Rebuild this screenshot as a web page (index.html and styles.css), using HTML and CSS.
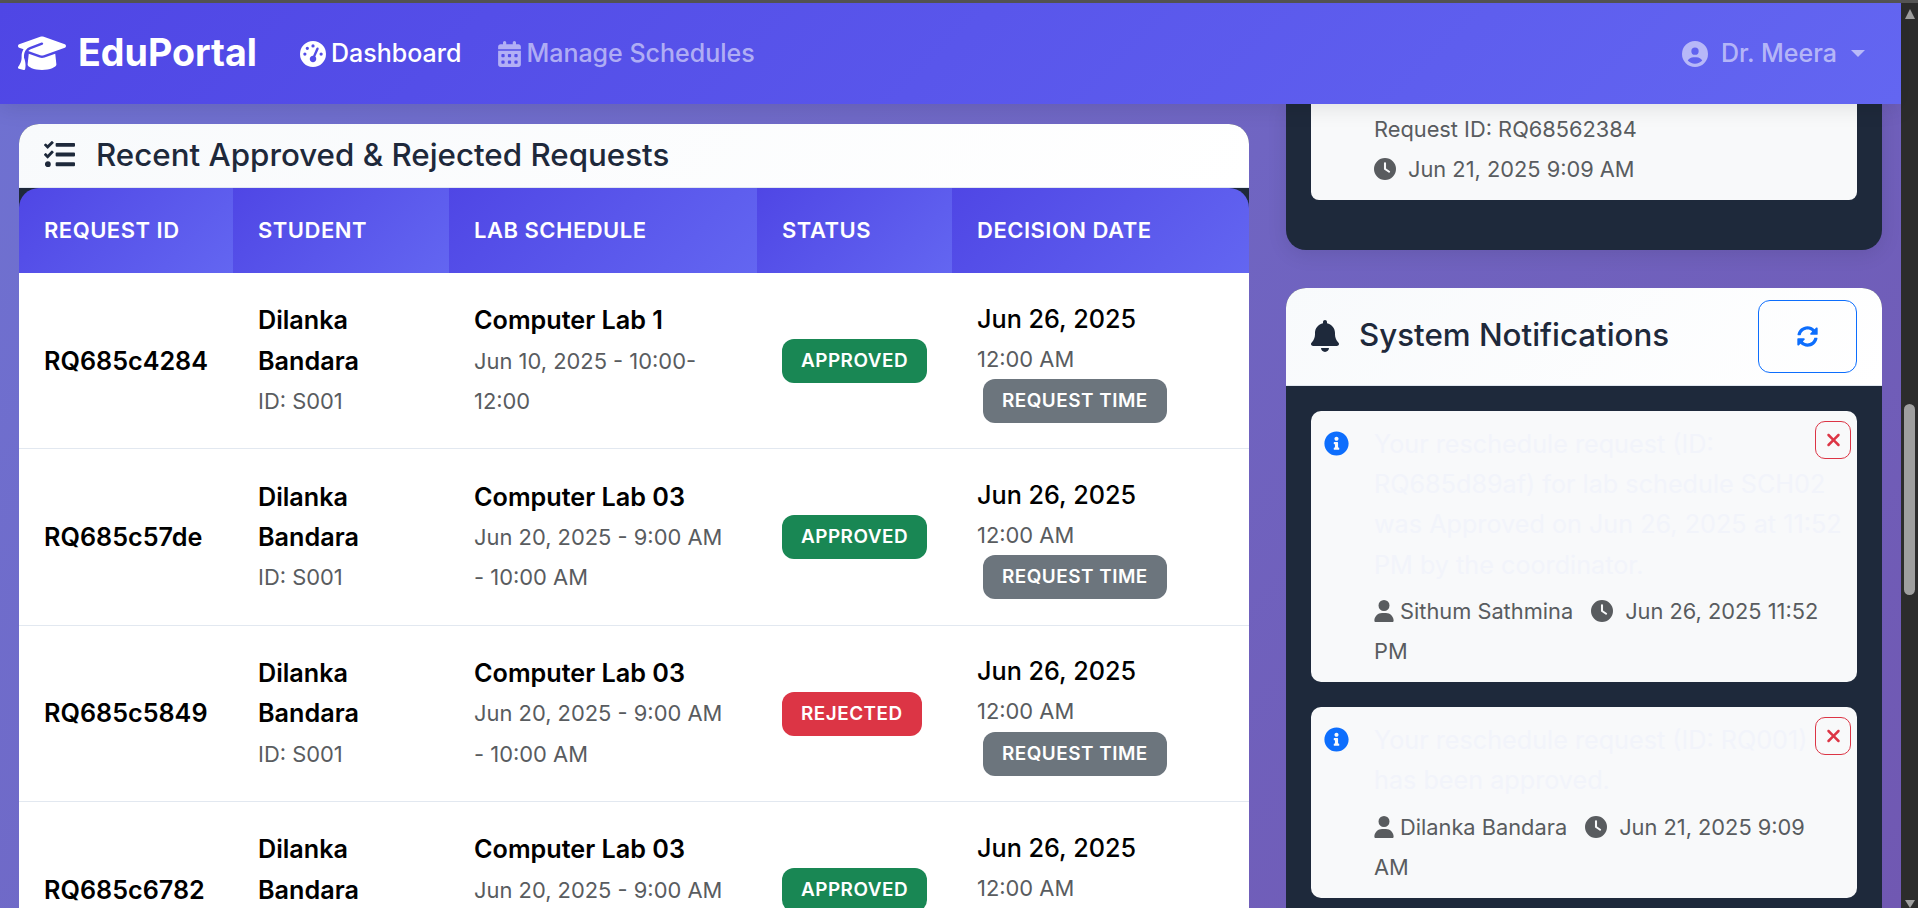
FILE: index.html
```html
<!DOCTYPE html>
<html lang="en">
<head>
<meta charset="utf-8">
<title>EduPortal</title>
<link rel="stylesheet" href="styles.css">
</head>
<body>
<svg class="defs" width="0" height="0" aria-hidden="true">
  <symbol id="i-cap" viewBox="0 0 640 512"><path d="M320 32c-8.1 0-16.1 1.4-23.7 4.1L15.8 137.4C6.3 140.9 0 149.9 0 160s6.3 19.1 15.8 22.6l57.9 20.9C57.3 229.3 48 259.8 48 291.9v28.1c0 28.4-10.8 57.7-22.3 80.8c-6.5 13-13.9 25.8-22.5 37.6C0 442.7-.9 448.3 .9 453.4s6 8.9 11.2 10.2l64 16c4.2 1.1 8.7 .3 12.4-2s6.3-6.1 7.1-10.4c8.6-42.8 4.3-81.2-2.1-108.7C90.3 344.3 86 329.8 80 316.5V291.9c0-30.2 10.2-58.7 27.9-81.5c12.9-15.5 29.6-28 49.2-35.7l157-61.7c8.2-3.2 17.5 .8 20.7 9s-.8 17.5-9 20.7l-157 61.7c-12.4 4.9-23.3 12.4-32.2 21.6l159.6 57.6c7.6 2.7 15.6 4.1 23.7 4.1s16.1-1.4 23.7-4.1L624.2 182.6c9.5-3.4 15.8-12.5 15.8-22.6s-6.3-19.1-15.8-22.6L343.7 36.1C336.1 33.4 328.1 32 320 32zM128 408c0 35.3 86 72 192 72s192-36.7 192-72L496.7 262.6 354.5 314c-11.1 4-22.8 6-34.5 6s-23.5-2-34.5-6L143.3 262.6 128 408z"/></symbol>
  <symbol id="i-gauge" viewBox="0 0 512 512"><path d="M0 256a256 256 0 1 1 512 0A256 256 0 1 1 0 256zM288 96a32 32 0 1 0 -64 0 32 32 0 1 0 64 0zM256 416c35.3 0 64-28.7 64-64c0-17.4-6.9-33.1-18.1-44.6L366 161.7c5.3-12.1-.2-26.3-12.3-31.6s-26.3 .2-31.6 12.3L257.9 288c-.6 0-1.3 0-1.9 0c-35.3 0-64 28.7-64 64s28.7 64 64 64zM176 144a32 32 0 1 0 -64 0 32 32 0 1 0 64 0zM96 288a32 32 0 1 0 0-64 32 32 0 1 0 0 64zm352-32a32 32 0 1 0 -64 0 32 32 0 1 0 64 0z"/></symbol>
  <symbol id="i-cal" viewBox="0 0 448 512"><path d="M128 0c17.7 0 32 14.3 32 32V64H288V32c0-17.7 14.3-32 32-32s32 14.3 32 32V64h48c26.5 0 48 21.5 48 48v48H0V112C0 85.5 21.5 64 48 64H96V32c0-17.7 14.3-32 32-32zM0 192H448V464c0 26.5-21.5 48-48 48H48c-26.5 0-48-21.5-48-48V192zm64 80v32c0 8.8 7.2 16 16 16h32c8.8 0 16-7.2 16-16V272c0-8.8-7.2-16-16-16H80c-8.8 0-16 7.2-16 16zm128 0v32c0 8.8 7.2 16 16 16h32c8.8 0 16-7.2 16-16V272c0-8.8-7.2-16-16-16H208c-8.8 0-16 7.2-16 16zm144-16c-8.8 0-16 7.2-16 16v32c0 8.8 7.2 16 16 16h32c8.8 0 16-7.2 16-16V272c0-8.8-7.2-16-16-16H336zM64 400v32c0 8.8 7.2 16 16 16h32c8.8 0 16-7.2 16-16V400c0-8.8-7.2-16-16-16H80c-8.8 0-16 7.2-16 16zm144-16c-8.8 0-16 7.2-16 16v32c0 8.8 7.2 16 16 16h32c8.8 0 16-7.2 16-16V400c0-8.8-7.2-16-16-16H208zm112 16v32c0 8.8 7.2 16 16 16h32c8.8 0 16-7.2 16-16V400c0-8.8-7.2-16-16-16H336c-8.8 0-16 7.2-16 16z"/></symbol>
  <symbol id="i-usercircle" viewBox="0 0 512 512"><path d="M399 384.2C376.9 345.8 335.4 320 288 320H224c-47.4 0-88.9 25.8-111 64.2c35.2 39.2 86.2 63.8 143 63.8s107.8-24.7 143-63.8zM0 256a256 256 0 1 1 512 0A256 256 0 1 1 0 256zm256 16a72 72 0 1 0 0-144 72 72 0 1 0 0 144z"/></symbol>
  <symbol id="i-clock" viewBox="0 0 512 512"><path d="M256 0a256 256 0 1 1 0 512A256 256 0 1 1 256 0zM232 120V256c0 8 4 15.5 10.7 20l96 64c11 7.4 25.9 4.4 33.3-6.7s4.4-25.9-6.7-33.3L280 243.2V120c0-13.3-10.7-24-24-24s-24 10.7-24 24z"/></symbol>
  <symbol id="i-user" viewBox="0 0 448 512"><path d="M224 256A128 128 0 1 0 224 0a128 128 0 1 0 0 256zm-45.7 48C79.8 304 0 383.8 0 482.3C0 498.7 13.3 512 29.7 512H418.3c16.4 0 29.7-13.3 29.7-29.7C448 383.8 368.2 304 269.7 304H178.3z"/></symbol>
  <symbol id="i-bell" viewBox="0 0 448 512"><path d="M224 0c-17.7 0-32 14.3-32 32V51.2C119 66 64 130.6 64 208v18.8c0 47-17.3 92.4-48.5 127.6l-7.4 8.3c-8.4 9.4-10.4 22.9-5.3 34.4S19.4 416 32 416H416c12.6 0 24-7.4 29.2-18.9s3.1-25-5.3-34.4l-7.4-8.3C401.3 319.2 384 273.9 384 226.8V208c0-77.4-55-142-128-156.8V32c0-17.7-14.3-32-32-32zm45.3 493.3c12-12 18.7-28.3 18.7-45.3H224 160c0 17 6.7 33.3 18.7 45.3s28.3 18.7 45.3 18.7s33.3-6.7 45.3-18.7z"/></symbol>
  <symbol id="i-sync" viewBox="0 0 512 512"><path d="M370.72 133.28C339.458 104.008 298.888 87.962 255.848 88c-77.458.068-144.328 53.178-162.791 126.85-1.344 5.363-6.122 9.15-11.651 9.15H24.103c-7.498 0-13.194-6.807-11.807-14.176C33.933 94.924 134.813 8 256 8c66.448 0 126.791 26.136 171.315 68.685L463.03 40.97C478.149 25.851 504 36.559 504 57.941V192c0 13.255-10.745 24-24 24H345.941c-21.382 0-32.09-25.851-16.971-40.971l41.75-41.749zM32 296h134.059c21.382 0 32.09 25.851 16.971 40.971l-41.75 41.75c31.262 29.273 71.835 45.319 114.876 45.28 77.418-.07 144.315-53.144 162.787-126.849 1.344-5.363 6.122-9.15 11.651-9.15h57.304c7.498 0 13.194 6.807 11.807 14.176C478.067 417.076 377.187 504 256 504c-66.448 0-126.791-26.136-171.315-68.685L48.97 471.03C33.851 486.149 8 475.441 8 454.059V320c0-13.255 10.745-24 24-24z"/></symbol>
  <symbol id="i-info" viewBox="0 0 512 512"><path d="M256 8C119.043 8 8 119.083 8 256c0 136.997 111.043 248 248 248s248-111.003 248-248C504 119.083 392.957 8 256 8zm0 110c23.196 0 42 18.804 42 42s-18.804 42-42 42-42-18.804-42-42 18.804-42 42-42zm56 254c0 6.627-5.373 12-12 12h-88c-6.627 0-12-5.373-12-12v-24c0-6.627 5.373-12 12-12h12v-64h-12c-6.627 0-12-5.373-12-12v-24c0-6.627 5.373-12 12-12h64c6.627 0 12 5.373 12 12v100h12c6.627 0 12 5.373 12 12v24z"/></symbol>
  <symbol id="i-tasks" viewBox="0 0 512 512"><path d="M139.61 35.5a12 12 0 0 0-17 0L58.93 98.81l-22.7-22.12a12 12 0 0 0-17 0L3.53 92.41a12 12 0 0 0 0 17l47.59 47.4a12.78 12.78 0 0 0 17.61 0l15.59-15.62L156.52 69a12.09 12.09 0 0 0 .09-17zm0 159.19a12 12 0 0 0-17 0l-63.68 63.72-22.7-22.1a12 12 0 0 0-17 0L3.53 252a12 12 0 0 0 0 17L51 316.5a12.77 12.77 0 0 0 17.6 0l15.7-15.69 72.2-72.22a12 12 0 0 0 .09-16.9zM64 368c-26.49 0-48.59 21.5-48.59 48S37.53 464 64 464a48 48 0 0 0 0-96zm432 16H208a16 16 0 0 0-16 16v32a16 16 0 0 0 16 16h288a16 16 0 0 0 16-16v-32a16 16 0 0 0-16-16zm0-320H208a16 16 0 0 0-16 16v32a16 16 0 0 0 16 16h288a16 16 0 0 0 16-16V80a16 16 0 0 0-16-16zm0 160H208a16 16 0 0 0-16 16v32a16 16 0 0 0 16 16h288a16 16 0 0 0 16-16v-32a16 16 0 0 0-16-16z"/></symbol>
  <symbol id="i-x" viewBox="0 0 384 512"><path d="M342.6 150.6c12.5-12.5 12.5-32.8 0-45.3s-32.8-12.5-45.3 0L192 210.7 86.6 105.4c-12.5-12.5-32.8-12.5-45.3 0s-12.5 32.8 0 45.3L146.7 256 41.4 361.4c-12.5 12.5-12.5 32.8 0 45.3s32.8 12.5 45.3 0L192 301.3 297.4 406.6c12.5 12.5 32.8 12.5 45.3 0s12.5-32.8 0-45.3L237.3 256 342.6 150.6z"/></symbol>
</svg>

<div class="topline"></div>
<div class="window">
  <div class="page">
    <nav class="navbar">
      <a class="brand"><svg class="brand-icon"><use href="#i-cap"/></svg><span>EduPortal</span></a>
      <a class="nav-link active"><svg class="ico-gauge"><use href="#i-gauge"/></svg><span>Dashboard</span></a>
      <a class="nav-link"><svg class="ico-cal"><use href="#i-cal"/></svg><span>Manage Schedules</span></a>
      <a class="nav-link nav-user"><svg class="ico-gauge"><use href="#i-usercircle"/></svg><span class="user-name">Dr. Meera</span><span class="caret"></span></a>
    </nav>
    <main class="content">
      <section class="col-left">
        <div class="card">
          <header class="card-head">
            <svg class="ico-tasks"><use href="#i-tasks"/></svg>
            <h2 class="card-title">Recent Approved &amp; Rejected Requests</h2>
          </header>
          <table class="req-table">
            <colgroup><col class="c1"><col class="c2"><col class="c3"><col class="c4"><col class="c5"></colgroup>
            <thead><tr><th>Request ID</th><th>Student</th><th>Lab Schedule</th><th>Status</th><th>Decision Date</th></tr></thead>
            <tbody>
              <tr>
                <td><strong>RQ685c4284</strong></td>
                <td><div class="strong">Dilanka Bandara</div><div class="muted">ID: S001</div></td>
                <td><div class="strong">Computer Lab 1</div><div class="muted">Jun 10, 2025 - 10:00-12:00</div></td>
                <td><span class="badge ok">APPROVED</span></td>
                <td><div class="date">Jun 26, 2025</div><div class="muted time">12:00 AM <span class="badge gray">REQUEST TIME</span></div></td>
              </tr>
              <tr>
                <td><strong>RQ685c57de</strong></td>
                <td><div class="strong">Dilanka Bandara</div><div class="muted">ID: S001</div></td>
                <td><div class="strong">Computer Lab 03</div><div class="muted">Jun 20, 2025 - 9:00 AM - 10:00 AM</div></td>
                <td><span class="badge ok">APPROVED</span></td>
                <td><div class="date">Jun 26, 2025</div><div class="muted time">12:00 AM <span class="badge gray">REQUEST TIME</span></div></td>
              </tr>
              <tr>
                <td><strong>RQ685c5849</strong></td>
                <td><div class="strong">Dilanka Bandara</div><div class="muted">ID: S001</div></td>
                <td><div class="strong">Computer Lab 03</div><div class="muted">Jun 20, 2025 - 9:00 AM - 10:00 AM</div></td>
                <td><span class="badge bad">REJECTED</span></td>
                <td><div class="date">Jun 26, 2025</div><div class="muted time">12:00 AM <span class="badge gray">REQUEST TIME</span></div></td>
              </tr>
              <tr>
                <td><strong>RQ685c6782</strong></td>
                <td><div class="strong">Dilanka Bandara</div><div class="muted">ID: S001</div></td>
                <td><div class="strong">Computer Lab 03</div><div class="muted">Jun 20, 2025 - 9:00 AM - 10:00 AM</div></td>
                <td><span class="badge ok">APPROVED</span></td>
                <td><div class="date">Jun 26, 2025</div><div class="muted time">12:00 AM <span class="badge gray">REQUEST TIME</span></div></td>
              </tr>
            </tbody>
          </table>
        </div>
      </section>
      <aside class="col-right">
        <div class="panel">
          <div class="top-item">
            <div class="meta">Request ID: RQ68562384</div>
            <div class="meta"><svg class="ico-clock"><use href="#i-clock"/></svg><span class="clock-text">Jun 21, 2025 9:09 AM</span></div>
          </div>
        </div>
        <div class="notif-card">
          <header class="notif-head">
            <svg class="ico-bell"><use href="#i-bell"/></svg>
            <h2 class="notif-title">System Notifications</h2>
            <button class="refresh"><svg class="ico-sync"><use href="#i-sync"/></svg></button>
          </header>
          <div class="notif-body">
            <article class="notif">
              <svg class="ico-info"><use href="#i-info"/></svg>
              <div class="notif-main">
                <p class="notif-msg">Your reschedule request (ID: RQ685d89af) for lab schedule SCH02 was Approved on Jun 26, 2025 at 11:52 PM by the coordinator.</p>
                <div class="meta"><svg class="ico-user"><use href="#i-user"/></svg><span class="who">Sithum Sathmina</span><svg class="ico-clock"><use href="#i-clock"/></svg><span class="clock-text">Jun 26, 2025 11:52</span> PM</div>
              </div>
              <button class="close"><svg class="ico-x"><use href="#i-x"/></svg></button>
            </article>
            <article class="notif">
              <svg class="ico-info"><use href="#i-info"/></svg>
              <div class="notif-main">
                <p class="notif-msg">Your reschedule request (ID: RQ001) has been approved.</p>
                <div class="meta"><svg class="ico-user"><use href="#i-user"/></svg><span class="who">Dilanka Bandara</span><svg class="ico-clock"><use href="#i-clock"/></svg><span class="clock-text">Jun 21, 2025 9:09</span> AM</div>
              </div>
              <button class="close"><svg class="ico-x"><use href="#i-x"/></svg></button>
            </article>
          </div>
        </div>
      </aside>
    </main>
  </div>
  <div class="scrollbar">
    <span class="arrow up"></span>
    <div class="track"><div class="thumb"></div></div>
    <span class="arrow down"></span>
  </div>
</div>
</body>
</html>
```

FILE: styles.css
```css
* { box-sizing: border-box; }
html, body { margin: 0; height: 100%; overflow: hidden; }
body {
  font-family: Inter, "Liberation Sans", sans-serif;
  font-size: 25.2px;
  line-height: 40.32px;
  color: #000;
  background: #2c2c2c;
  display: flex;
  flex-direction: column;
}
.defs { position: absolute; }
svg { fill: currentColor; display: inline-block; flex: none; }
.topline { height: 3px; background: #555; flex: none; }
.window { flex: 1; display: flex; min-height: 0; }

/* page */
.page {
  flex: 1;
  min-width: 0;
  display: flex;
  flex-direction: column;
  background: linear-gradient(135deg, #6f72d2 0%, #7058b2 100%);
}

/* navbar */
.navbar {
  height: 101px;
  flex: none;
  display: flex;
  align-items: center;
  padding: 0 36px 0 18px;
  background: linear-gradient(135deg, #4f46e5 0%, #6366f1 100%);
  box-shadow: 0 4px 20px rgba(0, 0, 0, .1);
  position: relative;
  z-index: 2;
}
.brand { display: flex; align-items: center; gap: 12px; color: #fff; font-size: 37.6px; font-weight: 700; margin-right: 43px; }
.brand-icon { width: 48px; height: 38.4px; }
.nav-link { display: flex; align-items: center; gap: 5px; color: rgba(255,255,255,.55); font-weight: 500; font-size: 25px; margin-right: 37px; }
.nav-link.active { color: #fff; }
.ico-gauge { width: 26px; height: 26px; }
.ico-cal { width: 23px; height: 26px; }
.nav-user { margin: 0 0 0 auto; }
.user-name { margin-left: 8px; }
.caret { width: 0; height: 0; margin-left: 9px; border-left: 7px solid transparent; border-right: 7px solid transparent; border-top: 7px solid currentColor; }

/* layout */
.content {
  flex: 1;
  min-height: 0;
  overflow: hidden;
  display: flex;
  gap: 37px;
  padding: 0 19px;
}
.col-left { width: 1230px; flex: none; padding-top: 20px; }
.col-right { width: 596px; flex: none; }

/* table card */
.card { background: #1e293b; border-radius: 20px 20px 0 0; overflow: hidden; }
.card-head {
  height: 64px;
  display: flex;
  align-items: center;
  gap: 21px;
  padding: 0 25px 2px;
  color: #1e293b;
  background: linear-gradient(135deg, #f8fafc, #fff);
  border-bottom: 1px solid #e2e8f0;
}
.ico-tasks { width: 31px; height: 31px; }
.card-title { margin: 0; font-size: 31.3px; font-weight: 500; line-height: 38px; }
.req-table { width: 1230px; table-layout: fixed; border-collapse: separate; border-spacing: 0; }
.c1 { width: 214px; } .c2 { width: 216px; } .c3 { width: 308px; } .c4 { width: 195px; } .c5 { width: 297px; }
.req-table th {
  height: 85px;
  padding: 0 25px;
  text-align: left;
  text-transform: uppercase;
  color: #fff;
  font-size: 22px;
  font-weight: 600;
  letter-spacing: .5px;
  background: linear-gradient(135deg, #4f46e5 0%, #6366f1 100%);
}
.req-table th:first-child { border-top-left-radius: 20px; }
.req-table th:last-child { border-top-right-radius: 20px; }
.req-table td {
  height: 176.4px;
  padding: 0 25px;
  background: #fff;
  border-bottom: 1px solid #e2e8f0;
  vertical-align: middle;
}
.req-table strong, .strong { font-weight: 600; }
.muted { font-size: 21.9px; color: #595c5f; }
.date { font-weight: 500; line-height: 40px; }
.badge {
  display: inline-block;
  height: 44px;
  line-height: 44px;
  padding: 0 19px;
  border-radius: 12px;
  color: #fff;
  font-size: 18.9px;
  font-weight: 600;
  letter-spacing: .5px;
  vertical-align: middle;
}
.ok { background: #198754; }
.bad { background: #dc3545; }
.gray { background: #6c757d; margin-left: 6px; }

/* right column */
.panel {
  background: #1e293b;
  border-radius: 0 0 20px 20px;
  padding: 0 25px 50px;
  margin-bottom: 38px;
  box-shadow: 0 4px 20px rgba(0, 0, 0, .1);
}
.top-item {
  background: #f8f9fa;
  border-radius: 0 0 8px 8px;
  padding: 5px 25px 10px 63px;
}
.meta { font-size: 21.8px; line-height: 40.32px; color: #595c5f; }
.meta svg { vertical-align: -3px; }
.ico-clock { width: 22px; height: 22px; }
.ico-user { width: 20px; height: 22px; }
.clock-text { margin-left: 12px; }
.who { margin: 0 18px 0 6px; }

.notif-card { background: #1e293b; border-radius: 20px 20px 0 0; overflow: hidden; }
.notif-head {
  height: 98px;
  display: flex;
  align-items: center;
  gap: 20px;
  padding: 0 25px;
  color: #1e293b;
  background: linear-gradient(135deg, #f8fafc, #fff);
  border-bottom: 1px solid #e2e8f0;
}
.ico-bell { width: 28px; height: 32px; }
.notif-title { margin: 0 0 2px; font-size: 31.3px; font-weight: 500; line-height: 38px; flex: 1; }
.refresh {
  width: 99px;
  height: 73px;
  background: transparent;
  border: 1px solid #0d6efd;
  border-radius: 12px;
  color: #0d6efd;
  padding: 0;
  display: flex;
  align-items: center;
  justify-content: center;
}
.ico-sync { width: 21px; height: 21px; }
.notif-body { padding: 25px 25px 40px; display: flex; flex-direction: column; gap: 25px; }
.notif {
  position: relative;
  display: flex;
  gap: 25px;
  padding: 13px 15px 10.5px 13px;
  background: #f8f9fa;
  border-radius: 10px;
}
.ico-info { width: 25px; height: 25px; margin-top: 7px; color: #0d6efd; }
.notif-main { flex: 1; min-width: 0; }
.notif-msg { margin: 0 0 6px; color: #f2f4fa; font-size: 25.2px; line-height: 40.32px; }
.close {
  position: absolute;
  top: 10px;
  right: 6px;
  width: 36px;
  height: 38px;
  padding: 0;
  background: transparent;
  border: 1px solid #dc3545;
  border-radius: 10px;
  color: #dc3545;
  display: flex;
  align-items: center;
  justify-content: center;
}
.ico-x { width: 15px; height: 20px; }

/* scrollbar */
.scrollbar { width: 17px; flex: none; background: #2c2c2c; display: flex; flex-direction: column; align-items: center; }
.track { flex: 1; width: 100%; padding-top: 385px; display: flex; justify-content: center; }
.thumb { width: 11px; height: 191px; background: #9f9f9f; border-radius: 6px; }
.arrow { width: 0; height: 0; border-left: 5.5px solid transparent; border-right: 5.5px solid transparent; flex: none; }
.arrow.up { border-bottom: 10px solid #9f9f9f; margin-top: 6px; }
.arrow.down { border-top: 8px solid #9f9f9f; }
```
